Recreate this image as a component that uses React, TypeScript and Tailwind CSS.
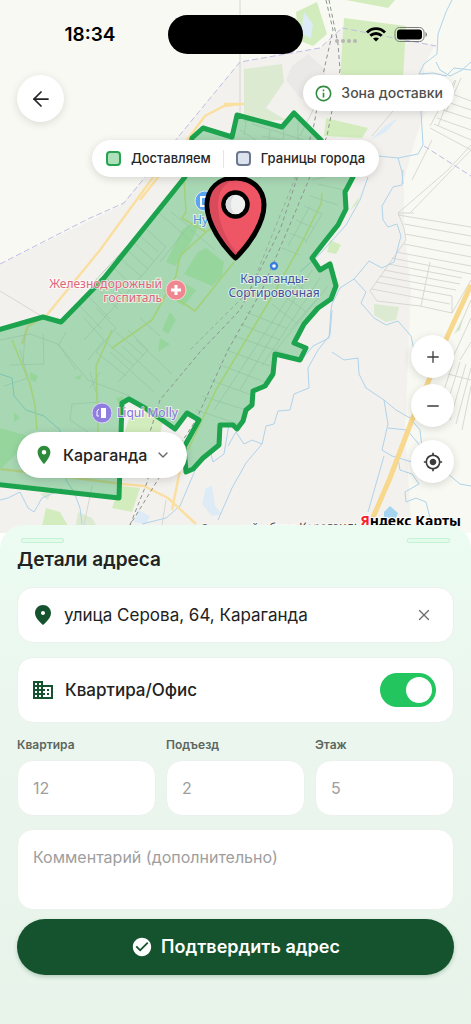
import { useState } from "react";
import { MdBusiness, MdCheckCircle, MdInfoOutline, MdLocationOn, MdMyLocation } from "react-icons/md";
import { ArrowLeft, ChevronDown, Minus, Plus, X } from "lucide-react";

const ZONE =
  "M-6 331L43 317L61 322L104 278L185 177L192 138L203 128L232 137L237 115L282 127L294 113L319 138L353 177L345 192L346 209L338 225L326 240L312 258L320 270L330 264L336 286L331 299L318 308L304 324L294 343L306 348L300 360L275 354L273 374L265 386L253 391L252 405L246 410L243 421L237 429L233 425L220 425L219 445L203 458L193 469L186 472L184 447L199 420L187 413L175 429L145 408L129 399L122 403L119 498L-6 484Z";

const cityStreets = [
  "M143 226L166 247M138 234L158 252M132 241L154 261M126 249L148 269M119 257L142 277M112 266L135 288M104 276L126 298M96 287L118 309M88 296L110 319M79 305L102 329",
  "M152 219L94 282M166 247L128 292L84 340M158 212L190 240M171 212L189 226L160 262M190 229L215 250M200 214L230 238M218 202L236 218",
  "M0 340L30 334L58 344L76 370M25 334L23 364M43 334L44 364L10 365M58 344L88 380L130 396M66 332L58 346",
  "M84 318L104 340L88 360M96 308L116 328L96 352M128 330L148 350L118 382M140 318L160 336M96 352L126 376M106 342L134 366M116 332L144 356",
  "M240 130L268 148L260 178M246 122L244 135M252 124L310 142M262 136L330 150M270 130L268 150M284 130L282 152M298 122L298 150M310 136L308 172M322 148L320 176",
  "M304 206L322 214L305 243M310 196L338 205M318 184L344 190M312 180L334 175M296 220L314 228M290 233L306 240M282 248L300 255M310 206L288 246",
  "M246 312L286 328M240 324L280 340M234 336L292 356M226 350L270 366M218 364L270 384M210 380L254 396M202 396L246 410M196 410L238 424",
  "M300 280L214 410M312 270L240 390M320 278L262 366M328 286L276 350M316 300L290 330M290 280L320 300M280 292L306 312M272 304L298 324",
  "M110 352L154 392M122 346L160 382M136 340L172 374M90 372L98 399M20 350L28 378L4 386M72 404L100 402M72 404L70 420L94 436M100 372L90 388",
];

const fieldLines = [
  "M398 215L471 227M404 224L471 236M405 234L471 246M404 244L471 257M396 252L471 266M392 258L471 274M388 264L462 278M384 270L460 284M380 276L456 290M376 282L452 296M372 289L450 304",
  "M398 213L404 228L406 240L370 291L377 301L420 306L452 313L471 280M430 262L421 306M452 296L452 313",
  "M398 213L448 170L471 145M411 212L471 150M398 213L414 213",
  "M437 118L471 130M443 110L471 119M447 102L471 110M452 94L471 101M434 124L471 140M438 126L456 80M430 128L471 150",
  "M455 80L430 126M461 78L446 112M432 140L412 180M458 330L471 300M454 355L471 318M460 360L471 342",
  "M454 360L438 408M460 362L444 414M466 364L450 420M471 368L456 424M471 386L462 430M448 374L471 380",
  "M240 0L240 62M404 98L372 136",
];

const rivers = [
  "M452 0L446 12L438 34L437 54L424 64L419 74L433 73L446 76L454 68L471 70",
  "M436 62L440 70L450 76L462 70L471 62M426 90L421 112L423 145L418 154L398 158L378 156M398 158L402 172L403 184",
  "M403 170L402 185L393 187L382 206L383 220L388 227L397 224L401 236L394 262L382 268L369 261L354 279L340 288L332 304L331 310L329 338L313 346L300 362",
  "M354 279L366 292L361 303L374 318L386 325L398 321L411 336L414 350",
  "M368 177L360 200L346 225L320 254L300 272M332 310L330 335L318 350L308 368L309 388L294 394L290 410L278 411L274 424L266 426L262 444L252 440L244 444L236 432L228 446",
  "M262 444L246 463L232 488L218 520M332 352L344 360L358 358L359 374L366 388L384 400L388 424L382 450L392 456L412 462M384 400L396 410L410 418L420 430L422 448L407 430L388 428",
  "M384 456L368 512M398 458L400 470L412 474L419 484L405 492L406 502L416 498L426 502L430 518M448 474L460 484L471 486",
  "M0 500L8 498L20 492L28 508L34 512L42 498L56 492L62 488",
  "M66 480L74 492L80 508L82 524M0 374L12 378L14 396L26 410L44 416L60 430L66 480",
  "M229 424L224 454L213 462L210 450M196 468L180 506L166 518L142 524",
];

const mainRoads = [
  "M154 176L100 250L46 316L28 326L22 344M178 150L154 176M240 104L224 106L205 116L178 152L140 200M224 104L244 104",
  "M0 469L60 476L122 484L144 486L168 498L196 524M180 470L172 510",
];

const zoneRoads = [
  "M184 180L186 212L182 218L206 232L180 256L176 276L152 320L112 348M206 232L240 208M234 262L195 311L164 290M12 340L30 384L35 405L37 430M112 330L96 366L98 430L88 456",
  "M322 193L321 204L300 246L270 300L240 350L216 390L188 450",
];

function MapLabel({ x, y, fill, anchor, children }) {
  return (
    <text x={x} y={y} fill={fill} textAnchor={anchor} stroke="#ffffff" strokeWidth={2} strokeOpacity={0.65} paintOrder="stroke">
      {children}
    </text>
  );
}

function MapCanvas() {
  return (
    <svg viewBox="0 0 471 533" preserveAspectRatio="xMidYMin slice" className="absolute inset-0 h-full w-full font-['Noto_Sans',sans-serif] text-[12px]" role="img" aria-label="Карта">
      <rect width="471" height="533" fill="#f8f9f3" />
      <path d="M240 62L320 48L342 28L435 45L424 66L426 110L415 140L404 180L404 225L411 290L405 430L412 533L0 533L0 264L120 206L145 177Z" fill="#f3f1ed" />
      <path d="M292 66L308 54L326 70L318 104L300 98L286 80Z" fill="#ebe9e8" />
      <g fill="#d3ecbd">
        <path d="M296 12L317 2L327 34L313 46L298 40Z" />
        <path d="M344 18L406 26L403 80L340 80Z" />
        <path d="M346 0L395 0L388 8Z" />
        <path d="M326 118L368 128L362 138L324 136Z" />
        <path d="M357 204L360 196L350 210ZM330 240L341 245L336 254L327 252Z" />
        <path d="M130 416L166 408L160 434L124 434ZM120 486L140 488L132 512L112 508Z" />
        <path d="M46 508L60 512L68 526L42 526Z" />
      </g>
      <path d="M244 69L282 64L284 82L266 108L286 120L244 122ZM374 304L399 307L396 320L386 322L374 315Z" fill="#dbead1" />
      <path d="M455 332L463 318L460 330L454 334ZM78 512L92 518L96 525L76 525ZM40 494L52 490L48 500Z" fill="#dbead1" />
      <g fill="#dcebf5">
        <path d="M304 12L313 24L311 38L301 34Z" />
        <path d="M398 118L386 132L370 140L385 126Z" />
        <path d="M206 488L212 486L215 506L222 514L212 516L202 504ZM138 510L150 516L146 524L134 522Z" />
        <path d="M384 512L390 506L398 513L396 518L384 518Z" fill="#a5d4f0" />
      </g>

      <g fill="none" stroke="#d0d0cc" strokeWidth="0.8">
        {fieldLines.map((d) => <path key={d} d={d} />)}
        <path d="M0 291L43 317M166 500L162 525M92 486L84 525M240 62L240 114M300 136L316 104" />
      </g>
      <g fill="none" stroke="#afd3ea" strokeWidth="1" strokeLinejoin="round">
        {rivers.map((d) => <path key={d} d={d} />)}
      </g>
      <g fill="none" stroke="#fadf9f" strokeWidth="2.4" strokeLinejoin="round">
        {mainRoads.map((d) => <path key={d} d={d} />)}
      </g>
      <path d="M471 285L448 335L412 420L390 478L371 522" fill="none" stroke="#f7d88c" strokeWidth="5" />
      <path d="M0 264L88 219L124 203L146 176L240 62L320 48L342 28L436 46M424 146L471 176" fill="none" stroke="#c0bce6" strokeWidth="1" strokeDasharray="6 3" />

      <path d={ZONE} fill="#23a850" fillOpacity="0.36" />
      <g fill="#96d69d">
        <path d="M182 230L204 214L192 240L176 266L166 262ZM198 252L206 248L224 262L222 276L212 286L184 274Z" />
        <path d="M186 284L196 290L184 306L174 300ZM170 312L176 320L168 334L162 330ZM160 338L170 344L158 352ZM0 428L28 436L24 446L0 470Z" />
        <path d="M14 412L20 418L14 422ZM30 372L38 376L36 382L30 380ZM74 378L82 374L80 380ZM116 398L124 396L120 406Z" />
      </g>
      <g fill="none" stroke="#93c4a1" strokeWidth="0.7">
        {cityStreets.map((d) => <path key={d} d={d} />)}
      </g>
      <g fill="none" stroke="#a3d17a" strokeWidth="1.6" strokeLinejoin="round">
        {zoneRoads.map((d) => <path key={d} d={d} />)}
      </g>
      <g fill="none" stroke="#8c9590" strokeWidth="1" strokeDasharray="4 3">
        <path d="M326 0L333 30L324 70L313 130L280 230L240 310L200 352L160 400L150 432L148 480L130 525" />
        <path d="M329 0L338 44L340 70L327 136L294 215L262 290L228 350L196 420L170 460L130 525" />
        <path d="M296 176L250 290L190 350" strokeOpacity="0.6" />
      </g>
      <path d={ZONE} fill="none" stroke="#1ca34d" strokeWidth="5" strokeLinejoin="round" />

      <circle cx="205" cy="201" r="10" fill="#5ba4ee" stroke="#d9ecf5" />
      <path d="M201 197H209V206H201Z" fill="none" stroke="#ffffff" strokeWidth="2" />
      <MapLabel x={193} y={224} fill="#4a90dc">Ну</MapLabel>
      <MapLabel x={162} y={288} fill="#e0667b" anchor="end">Железнодорожный</MapLabel>
      <MapLabel x={162} y={302} fill="#e0667b" anchor="end">госпиталь</MapLabel>
      <circle cx="176" cy="290" r="10" fill="#f0868f" stroke="#f9d5d8" />
      <path d="M176 285V295M171 290H181" stroke="#ffffff" strokeWidth="3" />
      <circle cx="274" cy="266" r="3" fill="#ffffff" stroke="#3a7fe0" strokeWidth="2.4" />
      <MapLabel x={274} y={283} fill="#44519b" anchor="middle">Караганды-</MapLabel>
      <MapLabel x={274} y={297} fill="#44519b" anchor="middle">Сортировочная</MapLabel>
      <circle cx="102" cy="413" r="10" fill="#8f7de0" stroke="#dcd6f6" />
      <path d="M101 408H106V418H101Z" fill="#ffffff" />
      <path d="M99 409L97 411V416H99" fill="none" stroke="#ffffff" />
      <MapLabel x={117} y={417} fill="#8672dc">Liqui Molly</MapLabel>
      <g transform="rotate(-1 200 533)">
        <MapLabel x={200} y={533} fill="#444444">Северный обход Караганды</MapLabel>
      </g>
      <text x="461" y="526" textAnchor="end" className="font-['Noto_Sans',sans-serif] text-[14px] font-bold" stroke="#ffffff" strokeWidth="2" paintOrder="stroke">
        <tspan fill="#f8202a">Я</tspan>ндекс Карты
      </text>

      <path d="M235.500 258C223 246 207 224 207 205C207 189 219 178 235.500 178C252 178 264 189 264 205C264 224 248 246 235.500 258Z" fill="#ee5565" stroke="#000000" strokeWidth="5" strokeLinejoin="round" />
      <path d="M235.500 255C226 245 209.500 224 209.500 205C209.500 190 218 182 231 180.500C222 186 218 194 218 205C218 224 228 242 237 253Z" fill="#d94a5a" />
      <circle cx="235.500" cy="204.500" r="12" fill="#f0f0f1" stroke="#000000" strokeWidth="4.500" />
      <path d="M235 195A9.500 9.500 0 1 0 235 214A13 13 0 0 1 235 195Z" fill="#dcdde1" />
    </svg>
  );
}

function StatusBar() {
  return (
    <div className="grid grid-cols-[1fr_135px_1fr] items-center pt-[15px]">
      <div className="pl-3 text-center text-[19px] leading-6 font-semibold text-black">18:34</div>
      <div className="h-[39px] rounded-full bg-black" />
      <div className="flex items-center justify-center gap-2 pr-3">
        <svg viewBox="0 0 24 6" className="mt-3 h-[6px] w-6" fill="#b4b6b2">
          <circle cx="3" cy="3" r="2" /><circle cx="9" cy="3" r="2" /><circle cx="15" cy="3" r="2" /><circle cx="21" cy="3" r="2" />
        </svg>
        <svg viewBox="0 0 20 15" className="h-[15px] w-5" fill="none" stroke="#000000" strokeWidth="2.8">
          <path d="M1 5.500C6 .4 14 .4 19 5.500M4.300 8.800C7.600 5.700 12.400 5.700 15.700 8.800" />
          <path d="M10 14.500L7 11.500C8.700 10 11.300 10 13 11.500Z" fill="#000000" stroke="none" />
        </svg>
        <svg viewBox="0 0 34 15" className="h-[15px] w-[34px]">
          <rect x="1" y=".5" width="29" height="14" rx="4.500" fill="none" stroke="#7b7d7a" />
          <rect x="3" y="2.500" width="25" height="10" rx="3" />
          <path d="M31.500 5V10C33.500 9 33.500 6 31.500 5Z" fill="#7b7d7a" />
        </svg>
      </div>
    </div>
  );
}

function RoundButton({ label, children }) {
  return (
    <button aria-label={label} className="flex size-[43px] items-center justify-center rounded-full bg-white text-[#3c3c3c] shadow-[0_2px_8px_rgba(0,0,0,0.14)]">
      {children}
    </button>
  );
}

function MapSection() {
  return (
    <section className="relative overflow-hidden">
      <MapCanvas />
      <div className="relative">
        <StatusBar />
        <div className="flex items-start justify-between px-[17px] pt-[21px]">
          <button aria-label="Назад" className="flex size-[47px] items-center justify-center rounded-full bg-white text-[#222222] shadow-[0_2px_8px_rgba(0,0,0,0.12)]">
            <ArrowLeft className="size-6" strokeWidth={1.75} />
          </button>
          <button className="flex h-9 items-center gap-2 rounded-full bg-white px-[11px] text-sm font-medium text-[#4f4f4f] shadow-[0_2px_8px_rgba(0,0,0,0.12)]">
            <MdInfoOutline className="size-[19px] text-[#2e8b3c]" />
            Зона доставки
          </button>
        </div>
        <div className="flex justify-center pt-[18px]">
          <div className="flex h-[37px] items-center rounded-full bg-white px-[14px] text-[13px] font-medium text-[#262626] shadow-[0_2px_8px_rgba(0,0,0,0.14)]">
            <span className="mr-[10px] size-[15px] rounded-[4px] border-2 border-[#27a352] bg-[#aee0bb]" />
            Доставляем
            <span className="mx-3 h-[18px] w-px bg-[#e6e6e6]" />
            <span className="mr-[10px] size-[15px] rounded-[4px] border-2 border-[#6c7890] bg-[#dde3ee]" />
            Границы города
          </div>
        </div>
        <div className="flex items-end justify-between px-[17px] pt-[158px] pb-[50px]">
          <button className="mb-[5px] flex h-[46px] items-center gap-2 rounded-full bg-white px-4 font-medium text-[#222222] shadow-[0_2px_8px_rgba(0,0,0,0.14)]">
            <MdLocationOn className="size-[22px] text-[#2e8b3c]" />
            Караганда
            <ChevronDown className="size-4 text-[#666666]" />
          </button>
          <div className="flex flex-col gap-[6px]">
            <RoundButton label="Приблизить"><Plus className="size-[18px]" strokeWidth={1.75} /></RoundButton>
            <RoundButton label="Отдалить"><Minus className="size-[18px]" strokeWidth={1.75} /></RoundButton>
            <div className="pt-[7px]">
              <RoundButton label="Моё местоположение"><MdMyLocation className="size-5" /></RoundButton>
            </div>
          </div>
        </div>
      </div>
    </section>
  );
}

const fields = [
  { id: "flat", label: "Квартира", hint: "12" },
  { id: "entrance", label: "Подъезд", hint: "2" },
  { id: "floor", label: "Этаж", hint: "5" },
];

function AddressSheet() {
  const [address, setAddress] = useState("улица Серова, 64, Караганда");
  const [isFlat, setIsFlat] = useState(true);

  return (
    <section className="relative -mt-2 rounded-t-[24px] bg-linear-to-b from-[#ecfcf2] via-[#ebf6ee] via-40% to-[#e8f4ea] px-[17px] pt-[13px] pb-[49px]">
      <div className="flex justify-between px-1">
        <span className="h-[5px] w-[43px] rounded-[2px] border border-[#c3f3d3] bg-[#e2fbea]" />
        <span className="h-[5px] w-[43px] rounded-[2px] border border-[#c3f3d3] bg-[#e2fbea]" />
      </div>
      <h1 className="pt-[3px] text-[19px] leading-7 font-semibold text-[#222222]">Детали адреса</h1>

      <div className="mt-[13px] flex h-14 items-center rounded-2xl border border-[#ebf1ec] bg-white pr-5 pl-[13px]">
        <svg viewBox="0 0 24 24" className="size-6 shrink-0 text-[#14532d]" fill="currentColor">
          <path d="M12 2c-4.200 0-8 3.220-8 8.200 0 3.180 2.450 6.920 7.340 11.230.38.33.95.33 1.330 0C17.550 17.120 20 13.380 20 10.200 20 5.220 16.200 2 12 2zm0 10c-1.100 0-2-.9-2-2s.9-2 2-2 2 .9 2 2-.9 2-2 2z" />
        </svg>
        <input aria-label="Адрес" value={address} onChange={(e) => setAddress(e.target.value)} className="ml-[9px] min-w-0 flex-1 bg-transparent pt-[2px] text-[17px] text-[#222222] outline-none" />
        <button aria-label="Очистить" onClick={() => setAddress("")} className="text-[#6b6b6b]">
          <X className="size-[18px]" strokeWidth={1.75} />
        </button>
      </div>

      <label className="mt-[14px] flex h-[66px] items-center rounded-2xl border border-[#ebf1ec] bg-white pr-[17px] pl-[13px] text-[17px] font-medium text-[#222222]">
        <MdBusiness className="mr-[10px] size-6 text-[#14532d]" />
        <span className="flex-1 pt-[2px]">Квартира/Офис</span>
        <input
          type="checkbox"
          role="switch"
          checked={isFlat}
          onChange={(e) => setIsFlat(e.target.checked)}
          className="flex h-[34px] w-14 appearance-none items-center rounded-full bg-[#c9d1cb] px-1 before:size-[26px] before:rounded-full before:bg-white checked:justify-end checked:bg-[#22c55e]"
        />
      </label>

      <div className="mt-[14px] grid grid-cols-3 gap-[10px]">
        {fields.map((f) => (
          <div key={f.id}>
            <label htmlFor={f.id} className="block text-xs leading-4 font-semibold text-[#5c665f]">{f.label}</label>
            <input id={f.id} placeholder={f.hint} className="mt-[7px] h-14 w-full rounded-2xl border border-[#ebf1ec] bg-white px-[15px] text-base text-[#222222] outline-none placeholder:text-[#9e9e9e]" />
          </div>
        ))}
      </div>

      <textarea aria-label="Комментарий" placeholder="Комментарий (дополнительно)" className="mt-[13px] block h-[81px] w-full resize-none rounded-2xl border border-[#ebf1ec] bg-white px-[15px] py-[15px] text-base text-[#222222] outline-none placeholder:text-[#9e9e9e]" />

      <button className="mt-[9px] flex h-14 w-full items-center justify-center gap-2 rounded-full bg-[#14532d] text-lg font-semibold text-white shadow-[0_2px_4px_rgba(20,83,45,0.25)]">
        <MdCheckCircle className="size-[22px]" />
        Подтвердить адрес
      </button>
    </section>
  );
}

export default function App() {
  return (
    <main className="min-h-screen bg-white font-['Inter',sans-serif]">
      <MapSection />
      <AddressSheet />
    </main>
  );
}
